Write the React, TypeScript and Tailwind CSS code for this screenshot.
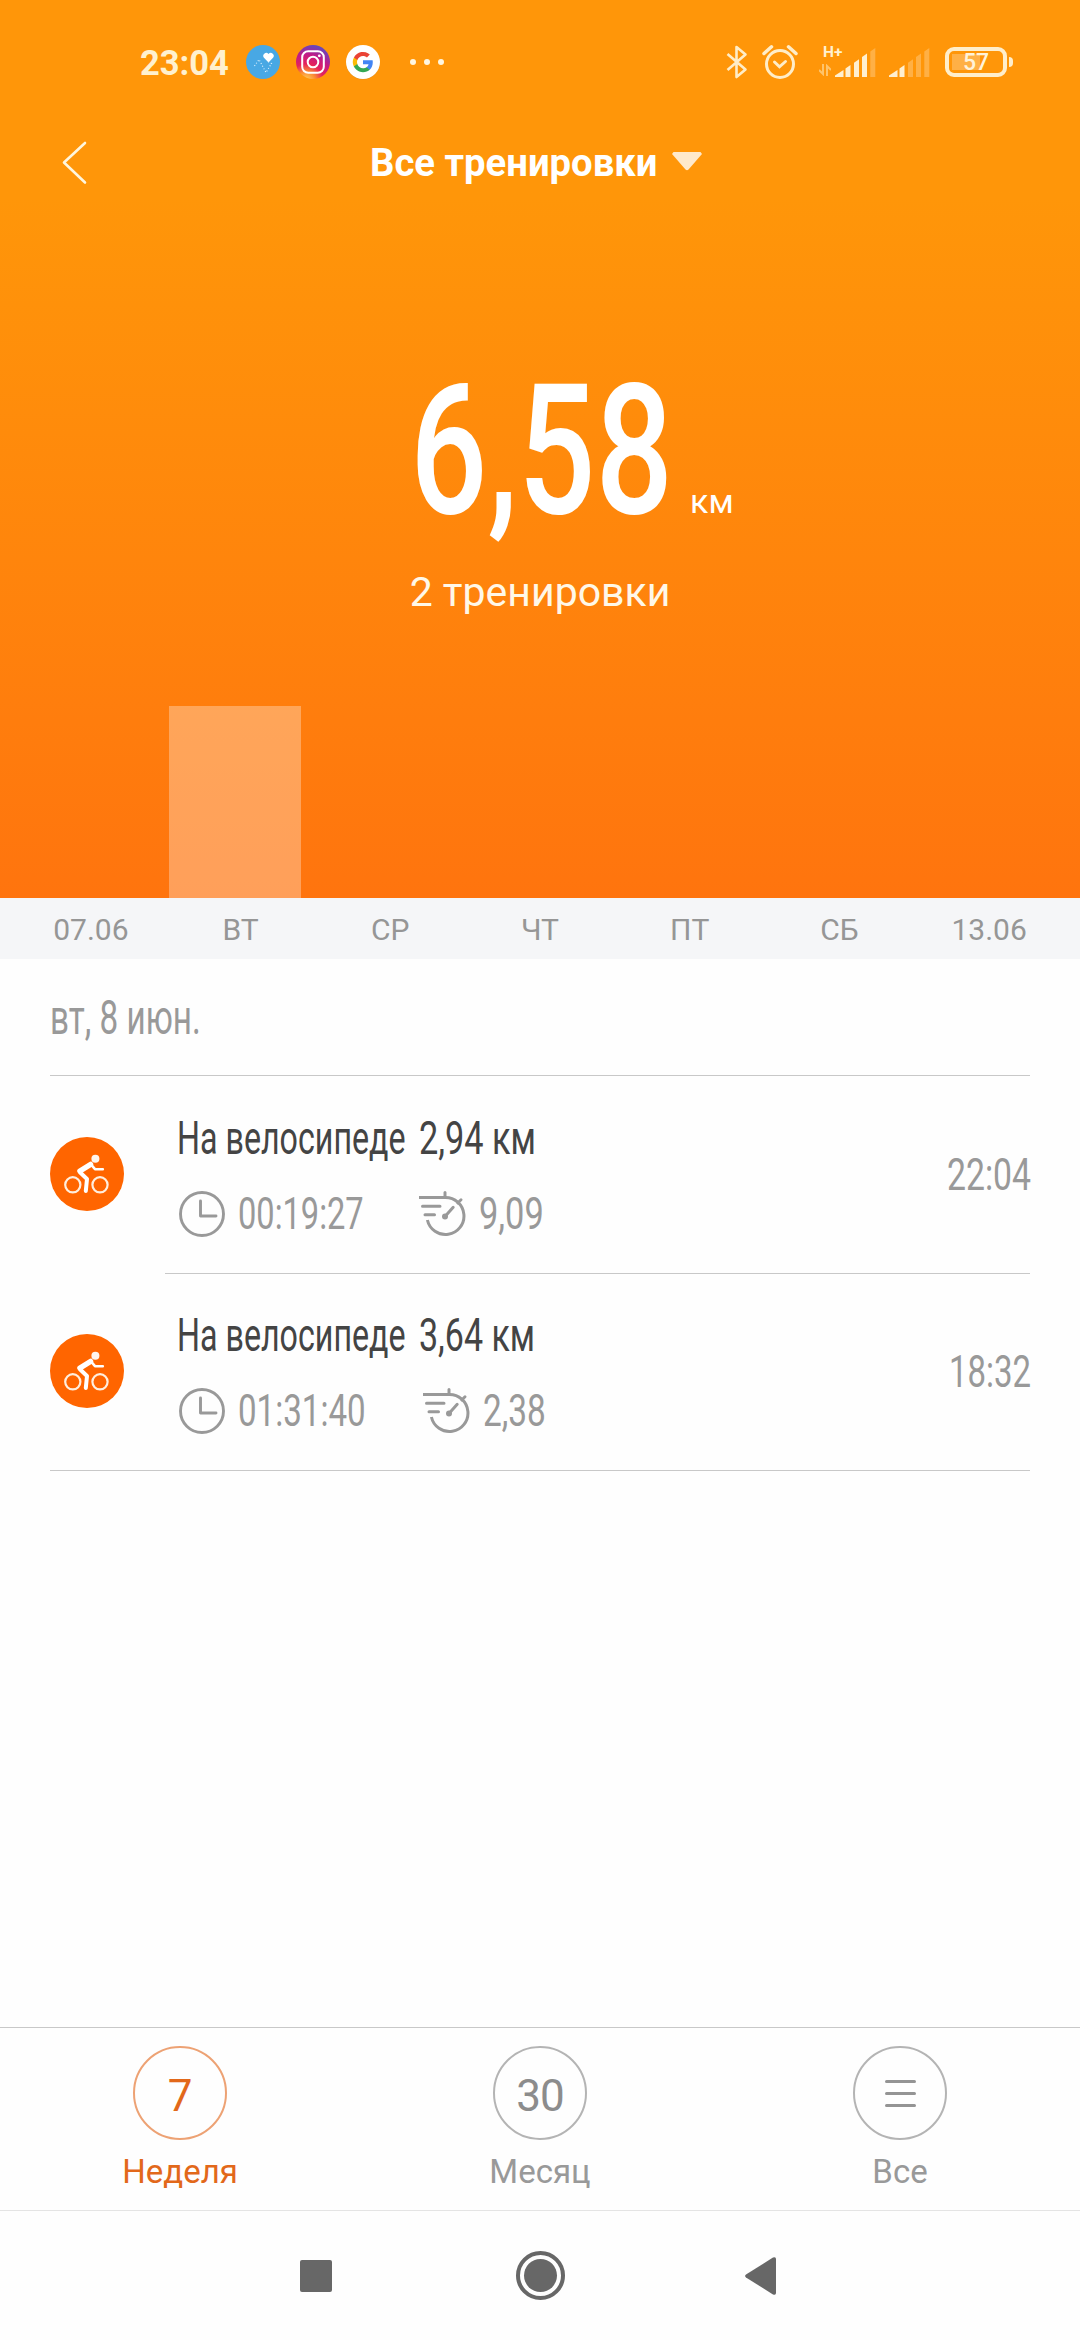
import { useLayoutEffect, useRef, type ReactNode } from "react";

/** Condensed text: squeezes its content horizontally to the width of its box. */
function Narrow({ children, className }: { children: ReactNode; className: string }) {
  const box = useRef<HTMLDivElement>(null);
  const text = useRef<HTMLSpanElement>(null);
  useLayoutEffect(() => {
    if (box.current && text.current) {
      const ratio = box.current.clientWidth / text.current.offsetWidth;
      text.current.style.transform = `scaleX(${ratio})`;
    }
  });
  return (
    <div ref={box} className={`shrink-0 whitespace-nowrap ${className}`}>
      <span ref={text} className="inline-block origin-left">
        {children}
      </span>
    </div>
  );
}

function HeartApp() {
  return (
    <svg width="36" height="36" viewBox="0 0 36 36">
      <circle cx="18" cy="18" r="17" fill="#48a8e4" />
      <path d="M23.500 18.500l-4.300-4.400a3 3 0 0 1 4.300-4.200 3 3 0 0 1 4.300 4.200z" fill="#fff" />
      <path d="M9.500 22l4.500-6.500 7 13 5.500-9-3.500-2" fill="none" stroke="#e4f4ff" strokeWidth="1.100" strokeDasharray="1 2" />
    </svg>
  );
}

function InstagramApp() {
  return (
    <svg width="36" height="36" viewBox="0 0 36 36">
      <defs>
        <radialGradient id="ig" cx="0.3" cy="1.05" r="1.1">
          <stop offset="0" stopColor="#ffd65a" />
          <stop offset="0.25" stopColor="#fb8a34" />
          <stop offset="0.45" stopColor="#e6235a" />
          <stop offset="0.7" stopColor="#c21a86" />
          <stop offset="1" stopColor="#5a4cc4" />
        </radialGradient>
      </defs>
      <circle cx="18" cy="18" r="17" fill="url(#ig)" />
      <g fill="none" stroke="#fff" strokeWidth="2">
        <rect x="7.2" y="7.2" width="21.6" height="21.6" rx="6" />
        <circle cx="18" cy="18" r="5.3" />
      </g>
      <circle cx="24.3" cy="11.8" r="1.4" fill="#fff" />
    </svg>
  );
}

function GoogleApp() {
  return (
    <svg width="36" height="36" viewBox="0 0 36 36">
      <circle cx="18" cy="18.6" r="17" fill="#c98a2e" opacity="0.5" />
      <circle cx="18" cy="18" r="17" fill="#fff" />
      <g transform="translate(7.8 7.8) scale(0.85)">
        <path fill="#4285f4" d="M23.5 12.3c0-.9-.1-1.6-.2-2.3H12v4.5h6.5c-.3 1.5-1.1 2.7-2.4 3.5v3h3.9c2.2-2.1 3.5-5.100 3.500-8.700z" />
        <path fill="#34a853" d="M12 24c3.200 0 6-1.100 8-2.900l-3.900-3c-1.100.7-2.400 1.200-4.100 1.200-3.100 0-5.800-2.100-6.700-5H1.300v3.100C3.300 21.300 7.300 24 12 24z" />
        <path fill="#fbbc05" d="M5.300 14.300a7.200 7.200 0 0 1 0-4.600V6.600h-4a12 12 0 0 0 0 10.800z" />
        <path fill="#ea4335" d="M12 4.800c1.800 0 3.300.6 4.600 1.800L20 3.200A12 12 0 0 0 1.300 6.600l4 3.100c.9-2.900 3.600-4.900 6.700-4.900z" />
      </g>
    </svg>
  );
}

function Bluetooth() {
  return (
    <svg width="22" height="36" viewBox="0 0 22 36" fill="none" stroke="#ffedc8" strokeWidth="2.600" strokeLinejoin="round">
      <path d="M1.500 10l18 15.500L10.500 33V3l9 7.500L1.500 26" />
    </svg>
  );
}

function Alarm() {
  return (
    <svg width="36" height="36" viewBox="0 0 36 36" fill="none" stroke="#ffedc8" strokeWidth="3">
      <circle cx="18" cy="20" r="13.500" />
      <path d="M12.500 18l5 4.800 6-5.300" strokeLinecap="round" />
      <path d="M2 9.500L9.500 2.800M34 9.500L26.500 2.800" strokeWidth="3.500" strokeLinecap="round" />
    </svg>
  );
}

function Signal({ on }: { on: number }) {
  const bars = [
    "M0 29V27.500L8.500 22V29z",
    "M10.500 29V20.500L15.500 17V29z",
    "M19 29V14.800L24 11.300V29z",
    "M27 29V9L32 5.500V29z",
    "M35.300 29V3.500L40.300 0V29z",
  ];
  return (
    <svg width="41" height="29" viewBox="0 0 41 29">
      {bars.map((d, i) => (
        <path key={d} d={d} fill="#ffefd0" opacity={i < on ? 1 : 0.3} />
      ))}
    </svg>
  );
}

function Battery() {
  return (
    <div className="flex items-center">
      <div className="relative flex h-[30px] w-[62px] items-center justify-center rounded-[9px] border-4 border-[#ffeecb]">
        <div className="absolute top-[3px] left-[3px] h-4 w-[28px] bg-white/25" />
        <span className="relative pt-[2px] text-[23px] leading-[22px] font-medium text-[#fff3da]">57</span>
      </div>
      <div className="ml-[2px] h-[10px] w-1 rounded-r bg-[#ffeecb]" />
    </div>
  );
}

function CyclistBadge() {
  return (
    <svg width="74" height="74" viewBox="0 0 74 74" className="mb-[2px] shrink-0">
      <circle cx="37" cy="37" r="37" fill="#ff6500" />
      <g fill="none" stroke="#ffeedd" strokeWidth="2.200">
        <circle cx="22.800" cy="47.800" r="7.600" />
        <circle cx="50" cy="47.800" r="7.600" />
      </g>
      <circle cx="45.400" cy="21.700" r="4" fill="#fff6ee" />
      <g fill="none" stroke="#fff" strokeLinecap="round" strokeLinejoin="round">
        <path d="M30 34L40.500 27.500" strokeWidth="5.500" />
        <path d="M41 27.500L45 32.200L52.800 32.300" strokeWidth="2.600" />
        <path d="M30.200 35.500L37 42L35.800 54" strokeWidth="4" />
      </g>
    </svg>
  );
}

function ClockIcon() {
  return (
    <svg width="46" height="46" viewBox="0 0 46 46" fill="none" stroke="#999" strokeWidth="2.900" className="shrink-0">
      <circle cx="23" cy="23" r="21.500" />
      <path d="M21.500 10v15H37" strokeLinecap="round" strokeLinejoin="round" />
    </svg>
  );
}

function SpeedIcon() {
  return (
    <svg width="48" height="46" viewBox="0 0 48 46" fill="none" stroke="#999" strokeWidth="3" className="shrink-0">
      <path d="M1 6.500H27A18.500 18.500 0 1 1 9.400 29" />
      <path d="M27 1.500v5M43 8.800l-3.200 3.200M4.500 15.200H22M7 23.700H16.500" strokeLinecap="round" />
      <path d="M27 25.500L35.200 16.300" strokeLinecap="round" />
      <circle cx="27" cy="25.500" r="3" fill="#999" stroke="none" />
    </svg>
  );
}

const days = ["07.06", "ВТ", "СР", "ЧТ", "ПТ", "СБ", "13.06"];

const workouts = [
  {
    height: "h-[198px]",
    distance: "2,94 км",
    distanceWidth: "w-[117px]",
    duration: "00:19:27",
    durationWidth: "w-[126px]",
    gap: "ml-[54px]",
    speed: "9,09",
    speedWidth: "w-[65px]",
    time: "22:04",
    timeWidth: "w-[84px]",
    line: "ml-[115px]",
  },
  {
    height: "h-[197px]",
    distance: "3,64 км",
    distanceWidth: "w-[116px]",
    duration: "01:31:40",
    durationWidth: "w-[128px]",
    gap: "ml-[56px]",
    speed: "2,38",
    speedWidth: "w-[63px]",
    time: "18:32",
    timeWidth: "w-[82px]",
    line: "",
  },
];

export default function App() {
  return (
    <div className="flex h-[2340px] w-[1080px] flex-col overflow-hidden bg-[#fefefe] font-['Roboto',sans-serif]">
      <header className="flex h-[898px] shrink-0 flex-col bg-linear-to-b from-[#ff9609] from-22% to-[#ff740e] text-white">
        <div className="flex h-[124px] shrink-0 items-center pr-[67px] pl-[140px]">
          <span className="w-[105px] pt-[2px] text-[34.500px] leading-[40px] font-bold text-[#fff1cf]">23:04</span>
          <div className="flex gap-[14px]">
            <HeartApp />
            <InstagramApp />
            <GoogleApp />
          </div>
          <div className="ml-[29px] flex gap-2">
            <i className="size-[6px] rounded-full bg-[#fff6e0]" />
            <i className="size-[6px] rounded-full bg-[#fff6e0]" />
            <i className="size-[6px] rounded-full bg-[#fff6e0]" />
          </div>
          <div className="ml-auto flex items-center">
            <Bluetooth />
            <div className="ml-[14px]">
              <Alarm />
            </div>
            <div className="relative ml-[37px] h-[29px]">
              <span className="absolute -top-[4px] -left-[12px] text-[15.500px] leading-[16px] font-bold text-[#fff1cf]">H+</span>
              <svg width="12" height="12" viewBox="0 0 12 12" className="absolute top-4 -left-4" fill="none" stroke="#ffe3ad" strokeWidth="2" opacity="0.6">
                <path d="M4 0v10L0 6M8 12V2l4 4" />
              </svg>
              <Signal on={4} />
            </div>
            <div className="mr-[15px] ml-[13px]">
              <Signal on={2} />
            </div>
            <Battery />
          </div>
        </div>

        <div className="flex h-[78px] shrink-0 items-center pl-[61px]">
          <svg width="26" height="46" viewBox="0 0 26 46" fill="none" stroke="#fff6dd" strokeWidth="2.600" strokeLinecap="round" strokeLinejoin="round" className="mb-px">
            <path d="M24 3L3 22.500L24 42.500" />
          </svg>
          <Narrow className="ml-[283px] w-[288px] text-[38px] leading-[46px] font-bold">Все тренировки</Narrow>
          <svg width="30" height="19" viewBox="0 0 30 19" className="mb-[3px] ml-[14px]">
            <path d="M1.500 0H28.500L30 2L16.500 17.500Q15 19 13.500 17.500L0 2z" fill="#ffe9cb" />
          </svg>
        </div>

        <div className="mt-[159px] flex h-[180px] shrink-0 items-baseline pl-[410px]">
          <Narrow className="w-[263px] text-[182px] leading-[180px] font-medium">6,58</Narrow>
          <span className="ml-[17px] text-[34px]">км</span>
        </div>
        <p className="mt-[21px] h-[60px] shrink-0 text-center text-[41px] leading-[60px] text-[#fff8e8]">2 тренировки</p>

        <div className="flex flex-1 items-end pl-[169px]">
          <div className="h-[192px] w-[132px] bg-[#fff2e8]/35" />
        </div>
      </header>

      <div className="flex h-[61px] shrink-0 bg-[#f5f6f8] px-4">
        {days.map((day) => (
          <span key={day} className="flex-1 pt-px text-center text-[30px] leading-[62px] text-[#969696]">
            {day}
          </span>
        ))}
      </div>

      <main className="flex-1 px-[50px]">
        <div className="h-[117px] border-b border-[#c8c8c8] pt-[28px]">
          <Narrow className="w-[151px] text-[48px] leading-[62px] font-[450] text-[#999]">вт, 8 июн.</Narrow>
        </div>
        {workouts.map((w) => (
          <section key={w.time} className={`flex flex-col ${w.height}`}>
            <div className="flex flex-1 items-center">
              <CyclistBadge />
              <div className="ml-[53px] flex flex-col pt-[2px]">
                <div className="flex h-[60px] text-[46px] leading-[60px] font-[450] text-[#444]">
                  <Narrow className="w-[229px]">На велосипеде</Narrow>
                  <Narrow className={`ml-[13px] ${w.distanceWidth}`}>{w.distance}</Narrow>
                </div>
                <div className="mt-[16px] flex h-[60px] items-center text-[45px] leading-[60px] font-[450] text-[#999]">
                  <div className="ml-[2px]">
                    <ClockIcon />
                  </div>
                  <Narrow className={`ml-[13px] ${w.durationWidth}`}>{w.duration}</Narrow>
                  <div className={w.gap}>
                    <SpeedIcon />
                  </div>
                  <Narrow className={`ml-[13px] ${w.speedWidth}`}>{w.speed}</Narrow>
                </div>
              </div>
              <Narrow className={`-mr-px ml-auto text-[45px] leading-[60px] font-[450] text-[#999] ${w.timeWidth}`}>{w.time}</Narrow>
            </div>
            <div className={`h-px bg-[#c8c8c8] ${w.line}`} />
          </section>
        ))}
      </main>

      <nav className="grid h-[183px] shrink-0 grid-cols-3 border-t border-[#c8c8c8] text-[33px] text-[#999]">
        <div className="flex flex-col items-center pt-[18px] text-[#e2681a]">
          <div className="flex size-[94px] items-center justify-center rounded-full border-2 border-[#eda274] pt-[6px] text-[44px]">7</div>
          <span className="mt-[5px] leading-[54px]">Неделя</span>
        </div>
        <div className="flex flex-col items-center pt-[18px]">
          <div className="flex size-[94px] items-center justify-center rounded-full border-2 border-[#b4b4b4] pt-[6px] text-[44px] tracking-[-1px] text-[#8c8c8c]">30</div>
          <span className="mt-[5px] leading-[54px]">Месяц</span>
        </div>
        <div className="flex flex-col items-center pt-[18px]">
          <div className="flex size-[94px] flex-col items-center justify-center gap-[9px] rounded-full border-2 border-[#b4b4b4]">
            <i className="h-[3px] w-[31px] rounded-full bg-[#949494]" />
            <i className="h-[3px] w-[31px] rounded-full bg-[#949494]" />
            <i className="h-[3px] w-[31px] rounded-full bg-[#949494]" />
          </div>
          <span className="mt-[5px] leading-[54px]">Все</span>
        </div>
      </nav>

      <footer className="flex h-[130px] shrink-0 items-center border-t border-[#e4e4e4] pl-[300px]">
        <div className="size-8 rounded-[2px] bg-[#676767]" />
        <div className="ml-[184px] flex size-[49px] items-center justify-center rounded-full border-4 border-[#676767]">
          <div className="size-[33px] rounded-full bg-[#676767]" />
        </div>
        <svg width="31" height="38" viewBox="0 0 31 38" className="ml-[180px]">
          <path d="M1 17.500L28 .600Q31 -.500 31 2V36Q31 38.500 28 37.400L1 20.500Q-.800 19 1 17.500z" fill="#676767" />
        </svg>
      </footer>
    </div>
  );
}
